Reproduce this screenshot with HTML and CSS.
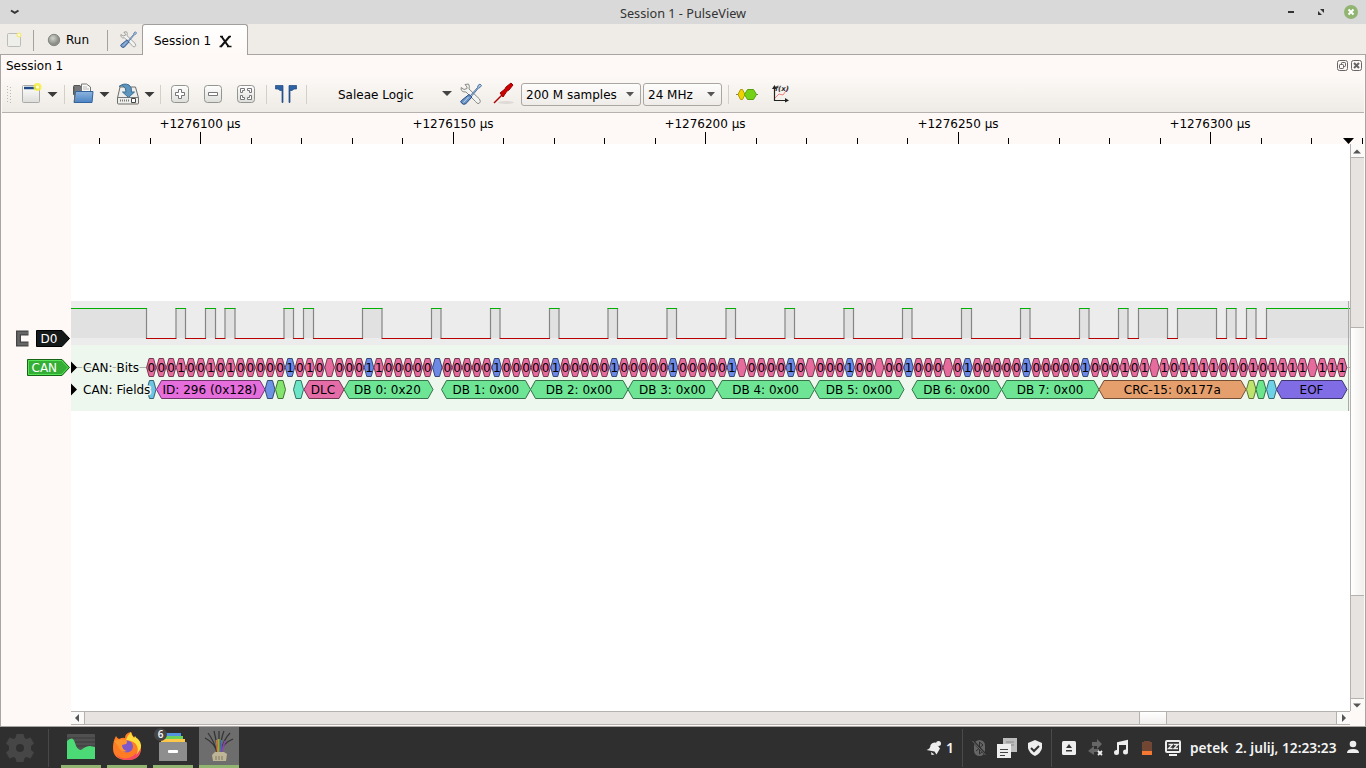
FILE: index.html
```html
<!DOCTYPE html>
<html lang="en">
<head>
<meta charset="utf-8">
<title>Session 1 - PulseView</title>
<link rel="stylesheet" href="styles.css">
</head>
<body>
<svg class="defs" width="0" height="0">
  <defs>
    <linearGradient id="blue" x2="0" y2="1"><stop stop-color="#8db4df"/><stop offset="1" stop-color="#4c84c4"/></linearGradient>
    <linearGradient id="metal" x2="0" y2="1"><stop stop-color="#fff"/><stop offset="1" stop-color="#dddeda"/></linearGradient>
    <radialGradient id="ball" cx=".4" cy=".35"><stop stop-color="#d0d3cc"/><stop offset="1" stop-color="#8c8f88"/></radialGradient>
    <symbol id="tools" viewBox="0 0 22 22">
      <path d="M5 1.500 8.500 1Q10 3 9 6L19.500 16Q21.500 19 19 20.500Q17 21 15.500 18.500L6 9Q2.500 9.500 1.200 7V4.500L4 6.500 7 5.500V4Z" fill="#f3f3f1" stroke="#888a85"/>
      <path d="m10.500 12.500 7-8L18 2.500 20 1 21.500 2.500 20 4.500 18.500 5 12 12.800" fill="#a8c5e5" stroke="#466b99" stroke-width=".9"/>
      <path d="M9 11.500 12 14 5.500 21Q3 22 1.500 20T1.500 17.500Z" fill="#6d94c2" stroke="#204a87"/>
      <path d="m8.500 14-5 5.500" stroke="#b9d3ed" fill="none"/>
    </symbol>
  </defs>
</svg>
<div class="window">
  <header class="titlebar">
    <svg class="menu-caret" width="12" height="8" viewBox="0 0 12 8"><path d="m2 2.500 3.800 2.300L9.500 2.500" fill="none" stroke="#333" stroke-width="2"/></svg>
    <span class="title">Session 1 - PulseView</span>
    <svg class="window-buttons" width="84" height="24" viewBox="0 0 84 24">
      <path d="M6 12h6" stroke="#333" stroke-width="2"/>
      <path d="M38 9h4v4zM36 11v4h4z" fill="#333"/>
      <circle cx="69" cy="12" r="7" fill="#91b571"/><path d="m66.500 9.500 5 5m0-5-5 5" stroke="#fff" stroke-width="2"/>
    </svg>
  </header>

  <nav class="tabs">
    <svg class="new-session" width="16" height="16" viewBox="0 0 16 16"><rect x="1.500" y="1.500" width="13" height="13" rx="1" fill="#eeeeea" stroke="#bdbdb7"/><circle cx="13" cy="3" r="2.500" fill="#f5ec83"/><circle cx="13" cy="3" r="1" fill="#fffef0"/></svg>
    <i class="tab-rule"></i>
    <svg class="run-ball" width="14" height="14" viewBox="0 0 14 14"><circle cx="7" cy="7" r="5.700" fill="url(#ball)" stroke="#858881"/></svg>
    <span class="run">Run</span>
    <i class="tab-rule second"></i>
    <svg class="tab-tools" width="17" height="17"><use href="#tools"/></svg>
    <div class="tab">Session 1
      <svg width="13" height="13" viewBox="0 0 13 13"><path d="M2.500 1.500 9.500 11.500M10.500 1.500 2 11.500" stroke="#111" stroke-width="2"/><path d="M1 1.500h3M8 11.500h4.500M10 1.500h2M.5 11.500h2.500" stroke="#111" stroke-width="1.400"/></svg>
    </div>
  </nav>

  <main class="session">
    <div class="dock-title"><span>Session 1</span>
      <svg width="26" height="12" viewBox="0 0 26 12" fill="none" stroke="#666">
        <rect x=".5" y=".5" width="10" height="10" rx="2"/><rect x="4.500" y="2.500" width="4" height="4" rx=".7"/><rect x="2.500" y="4.500" width="4" height="4" rx=".7" fill="#fef9f6"/>
        <rect x="14.500" y=".5" width="10" height="10" rx="2"/><path d="m17 3 5 5M22 3l-5 5" stroke-width="2"/>
      </svg>
    </div>
    <div class="toolbar">
      <svg class="toolbar-icons" width="320" height="36" viewBox="0 0 320 36">
        <path d="M7.500 10v18M10.500 11v16" stroke="#bcb8b3" stroke-dasharray="1 2"/>
        <rect x="22.500" y="9.500" width="17" height="17" rx="1" fill="url(#metal)" stroke="#aaa"/><path d="M24 12h14" stroke="#204a87" stroke-width="2.500"/><circle cx="37.500" cy="11" r="4" fill="#f7ee3e" opacity=".85"/><circle cx="37.500" cy="11" r="1.800" fill="#fffdc0"/>
        <g fill="#3b3b3b"><path d="M47.500 16h10l-5 5zM99.500 16h10l-5 5zM144.500 16h10l-5 5z"/></g>
        <g stroke="#d3cfc9"><path d="M64.500 9v19M160.500 9v19M266.500 9v19M306.500 9v19"/></g>
        <path d="M74 9.500h6l2 3h3v6H73.500v-8z" fill="#76777a" stroke="#555753"/><path d="M81.500 8h5l4 3v6h-9z" fill="#f7f7f5" stroke="#777"/><path d="M83 11h4m-4 2h6" stroke="#bbb"/><path d="M75.500 15.500h17.500l-1 11H74z" fill="url(#blue)" stroke="#33649d"/><path d="M74.500 11v15" stroke="#666"/>
        <path d="m120 11-2.500 11v5q0 1 1 1h19q1 0 1-1V22l-3-11z" fill="#eeeeec" stroke="#6c6e69"/><path d="M118 21.500h20" stroke="#777"/><path d="M120 24.500h9" stroke="#777" stroke-width="2" stroke-dasharray="1 1"/><path d="M131.500 22.500h4v4h-4z" fill="#fff" stroke="#444"/>
        <path d="M119 10.500q5-4 10-1.500 3 2 2.500 7h3l-6 5.500-6-5.500h3.500q0-5-3-6-2-.5-4 .5z" fill="#5e95bd" stroke="#3b6e96"/>
        <g fill="url(#metal)" stroke="#93958f"><rect x="171.500" y="9.500" width="17" height="17" rx="3"/><rect x="204.500" y="9.500" width="17" height="17" rx="3"/><rect x="237.500" y="9.500" width="17" height="17" rx="3"/></g>
        <g fill="#fff" stroke="#777"><path d="M178.500 13.500h3v3h3v3h-3v3h-3v-3h-3v-3h3zM208.500 16.500h9v3h-9z"/></g>
        <g fill="#fff" stroke="#777"><path d="M240.500 12.500h4v2h-2v2h-2zM251.500 12.500v4h-2v-2h-2v-2zM240.500 23.500v-4h2v2h2v2zM251.500 23.500h-4v-2h2v-2h2z"/></g>
        <g fill="#2d63a5" stroke="#1d467e" stroke-width=".7"><path d="M275.500 9.500h7.500v17h-1v-12h-2l-2-1.500h-2.500zM289 9.500h7.500V13H294l-2 1.500h-2v12h-1z"/></g>
      </svg>
      <span class="device">Saleae Logic</span>
      <svg class="caret" width="10" height="6" viewBox="0 0 10 6"><path d="M0 0h10L5 5z" fill="#444"/></svg>
      <svg class="config" width="22" height="22"><use href="#tools"/></svg>
      <svg class="probe" width="22" height="24" viewBox="0 0 22 24"><ellipse cx="13" cy="20.500" rx="8" ry="1.500" fill="#dedbd7"/><path d="m1 21 9-9" stroke="#a00" stroke-width="1.500"/><path d="m7 11 5-4 1-2 5-4 2 2-4 5-2 1-4 6z" fill="#cc0000" stroke="#990000"/></svg>
      <div class="select samples">200 M samples<svg width="8" height="5" viewBox="0 0 8 5"><path d="M0 0h8L4 4.500z" fill="#555"/></svg></div>
      <div class="select rate">24 MHz<svg width="8" height="5" viewBox="0 0 8 5"><path d="M0 0h8L4 4.500z" fill="#555"/></svg></div>
      <svg class="end-icons" width="70" height="36" viewBox="0 0 70 36">
        <path d="M6.500 9v19" stroke="#d3cfc9"/>
        <path d="M14 18.500h22" stroke="#777"/><path d="m16 18.500 2.500-5h2l2.500 5-2.500 5h-2z" fill="#edd400" stroke="#b39b00"/><path d="m22.500 18.500 3-5h6l3 5-3 5h-6z" fill="#73d216" stroke="#56a20e"/>
        <path d="M52.500 11v13.500H66" stroke="#222" fill="none" stroke-width="1.200"/><path d="m50 13 2.500-4 2.500 4zM63 22l4 2.500-4 2z" fill="#222"/><path d="m53 22 4-4 4 1 5-7" fill="none" stroke="#ee8080"/><text x="53" y="15" class="fx">f(x)</text>
      </svg>
    </div>

    <div class="view">
      <svg id="ruler" width="1363" height="31" viewBox="0 113 1363 31"></svg>
      <div class="view-row">
        <svg class="labels" width="71" height="567" viewBox="0 144 71 567">
          <path d="M28.500 333h-10v11h10" fill="none" stroke="#444" stroke-width="5"/><path d="M28 333h-9.500v11H28" fill="none" stroke="#666" stroke-width="2.500"/>
          <path d="M36.500 330.500H62l7.500 8-7.500 8H36.500z" fill="#16191a" stroke="#000"/><text x="40.500" y="343" class="chip">D0</text>
          <path d="M27.500 359.500H62l7.500 8-7.500 8H27.500z" fill="#34ae34" stroke="#176317"/><path d="M28.500 360.500H61.500l6.500 7-6.500 7h-33z" fill="none" stroke="#55e555"/><text x="31.500" y="372" class="chip">CAN</text>
        </svg>
        <svg id="traces" width="1279" height="567" viewBox="71 144 1279 567"></svg>
        <div class="vscroll">
          <svg width="13" height="14"><path d="M2 9.500h8l-4-4z" fill="#555"/></svg>
          <div class="vthumb"></div>
          <svg width="13" height="13"><path d="M2 4.500h8l-4 4z" fill="#555"/></svg>
        </div>
      </div>
      <div class="hscroll">
        <svg width="14" height="12"><path d="M8 2v8L4 6z" fill="#555"/></svg>
        <div class="hthumb"></div>
        <svg width="14" height="12"><path d="M5 2v8l4-4z" fill="#555"/></svg>
      </div>
    </div>
  </main>

  <footer class="taskbar">
    <svg class="gear" width="30" height="30" viewBox="0 0 30 30"><path d="M11.500 1h7l1 4 2 1 4-1.500 3.500 6-3 2.500v4l3 2.500-3.500 6-4-1.500-2 1-1 4h-7l-1-4-2-1-4 1.500-3.500-6L4 17v-4l-3-2.500 3.500-6 4 1.500 2-1z" fill="#464646"/><circle cx="15" cy="15" r="4" fill="#2f2f2f"/></svg>
    <i class="task-rule"></i>
    <div class="task"><svg width="28" height="28" viewBox="0 0 28 28"><rect width="28" height="25" y="2" rx="1" fill="#505050"/><path d="M0 6h28M0 10h28M0 14h28" stroke="#3b3b3b"/><path d="M0 9Q6 3 8 11q2 7 6 7 5-4 9-4l5 1v12H0z" fill="#4cda76"/></svg></div>
    <div class="task"><svg width="30" height="30" viewBox="0 0 30 30"><path d="M4 5q1 2 3 3 4-2 6-1 0-5 6-6 1 4 5 7 5 3 5 9 0 12-14 12T1 17Q1 10 4 5z" fill="#ff7b24"/><path d="M4 23q7 8 17 2 7-5 7-12 3 16-13 16Q7 29 4 23z" fill="#f54963"/><path d="M19 1q-4 4-5 8 9 1 11 6t-1 9q9-9 2-16-2-1-3-3l-1 2q-3-3-3-6z" fill="#ffdc3e"/><circle cx="15" cy="15.500" r="6" fill="#8059c9"/><path d="M2 10q6-3 12-1 2 2 0 4l-4 1q0 5 5 6-7 2-9-5z" fill="#ff952d"/></svg></div>
    <div class="task"><svg width="30" height="30" viewBox="0 0 30 30"><path d="M7 2h16v5H7z" fill="#5294e2"/><path d="M5 5h20v5H5z" fill="#6cd15c"/><path d="M3 8h24v5H3z" fill="#fdc747"/><rect x="1" y="11" width="28" height="20" rx="1" fill="#8e8e8e"/><rect x="10" y="19" width="10" height="3" rx="1" fill="#fff"/></svg><b class="badge">6</b></div>
    <div class="task active"><svg width="32" height="32" viewBox="0 0 32 32" fill="none"><path d="M14 23Q12 13 2 8M14 22Q11 11 5 3M15 22Q13 9 11 1M16 22V1M17 22Q18 8 21 1M18 22Q20 10 27 3M18 22Q20 13 30 9" stroke="#333" stroke-width="1.200"/><path d="M14.500 22 13.500 10" stroke="#c7753b" stroke-width="1.500"/><path d="M15.500 22V9" stroke="#d9a030" stroke-width="1.500"/><path d="M16.500 22V9" stroke="#57994b" stroke-width="1.500"/><path d="m17.500 22 1-12" stroke="#4771bc" stroke-width="1.500"/><path d="m18.500 22 3.500-11" stroke="#8e44ad" stroke-width="1.800"/><path d="m9 25 3-3h9l3 2-1 7H10z" fill="#bdb596"/><path d="M13 26v4m3-4v4m3-4v4" stroke="#827b64"/></svg></div>

    <div class="tray">
      <svg width="368" height="41" viewBox="920 727 368 41" class="tray-icons">
        <path d="M926.500 750q4-1 4-5 1.500-3 5-2.500l4.500 6-3.500 6-2-3z" fill="#eee"/><circle cx="938.500" cy="743.500" r="2.500" fill="#eee"/><path d="m931 752 3.500 2.500-3 .5z" fill="#eee"/>
        <text x="946" y="753" class="tray-text">1</text>
        <path d="M962.500 729v38M1051.500 729v38" stroke="#4a4a4a"/>
        <rect x="974" y="740" width="11" height="16" rx="5.500" fill="#666"/><path d="m976 744 7 7-3.500 3v-12l3.500 3-7 6" fill="none" stroke="#2f2f2f"/><path d="m973 741 13 14" stroke="#2f2f2f" stroke-width="2.500"/><path d="m972.500 741 13 14" stroke="#666"/>
        <path d="M1003 738h14v14h-14z" fill="#bdbdbd"/><path d="M1006 742h8m-8 3h8" stroke="#888"/><path d="M997 744h14v14h-14z" fill="#eee"/><path d="M1000 749.500h8m-8 3h8m-8 3h5" stroke="#444"/>
        <path d="m1035 740 7 3v5q-1 5-7 8-6-3-7-8v-5z" fill="#eee"/><path d="m1031 748 3 3 5-5" fill="none" stroke="#333" stroke-width="2"/>
        <rect x="1062" y="741" width="14" height="14" rx="1.500" fill="#eee"/><path d="m1066 748 3-4 3 4zM1066 750h6v1.500h-6z" fill="#333"/>
        <path d="M1092 742h5v-3l5 5-5 5v-3h-5zM1099 749h-5v-3l-6 5 6 4v-3h5z" fill="#666"/><path d="m1098 751 4 4m0-4-4 4" stroke="#eee" stroke-width="1.800"/>
        <path d="M1118 752v-9l9-2v10" fill="none" stroke="#eee" stroke-width="2"/><path d="M1118 743.500h9" stroke="#eee" stroke-width="3"/><circle cx="1116.500" cy="752.500" r="2.500" fill="#eee"/><circle cx="1125.500" cy="752" r="2.500" fill="#eee"/>
        <path d="M1144 741h6v1h2v9h-10v-9h2z" fill="#714733"/><path d="M1142 751h10v4h-10z" fill="#f57933"/>
        <rect x="1166" y="741" width="14" height="11" rx="1" fill="#333" stroke="#eee" stroke-width="2"/><path d="M1168.500 744.500h4l-4 4h4M1174 744.500h4l-4 4h4" fill="none" stroke="#eee" stroke-width="1.300"/><path d="M1169 755h8" stroke="#eee" stroke-width="2"/>
      </svg>
      <span class="clock"><span>petek</span><span>2. julij, 12:23:23</span></span>
      <svg class="user" width="14" height="15" viewBox="0 0 14 15"><circle cx="7" cy="4" r="3.300" fill="#eee"/><path d="M1 13q0-4 6-4t6 4z" fill="#eee"/></svg>
    </div>
  </footer>
</div>
<script src="traces.js"></script>
</body>
</html>
```
FILE: styles.css
```css
* { box-sizing: border-box; }
body { margin: 0; font: 13px/16px "DejaVu Sans", sans-serif; color: #000; }
svg { display: block; flex: none; }
.defs { position: absolute; }
.window { width: 1366px; height: 768px; display: flex; flex-direction: column; overflow: hidden; background: #efebe7; }

.titlebar { height: 24px; flex: none; display: grid; grid-template-columns: 1fr auto 1fr; align-items: center; background: #d9d9d9; }
.menu-caret { margin-left: 9px; }
.title { font: 12.7px/20px "Noto Sans", sans-serif; color: #333; padding-top: 2px; }
.window-buttons { justify-self: end; }

.tabs { height: 31px; flex: none; display: flex; align-items: center; border-bottom: 1px solid #a9a5a2; font-size: 12px; }
.new-session { margin-left: 6px; margin-top: 1px; }
.tab-rule { width: 1px; height: 21px; background: #a5a19d; margin: 2px 13px 0 11px; }
.run-ball { margin-top: 1px; }
.run { margin-left: 5px; width: 41px; padding-top: 2px; }
.tab-rule.second { margin: 2px 12px 0 0; }
.tab { width: 106px; height: 31px; margin-left: 5px; padding: 2px 0 0 11px; align-self: flex-start; display: flex; align-items: center; gap: 8px; border: 1px solid #a29e9b; border-bottom: 0; border-radius: 3px 3px 0 0; background: linear-gradient(#fff, #fef9f6); white-space: nowrap; }

.session { flex: 1; min-height: 0; border: solid #a9a5a2; border-width: 0 1px 1px; background: #fef9f6; display: flex; flex-direction: column; }
.dock-title { height: 21px; flex: none; display: flex; justify-content: space-between; align-items: center; padding: 0 2px 0 5px; font-size: 12px; }
.toolbar { height: 37px; flex: none; margin: 0 1px; display: flex; align-items: center; border-bottom: 1px solid #b5b1ae; background: linear-gradient(#fdf9f6, #eeebe6); font-size: 12px; }
.toolbar-icons { margin-left: -2px; }
.device { width: 105px; margin-left: 18px; padding-top: 1px; }
.toolbar .caret { margin: -1px 0 0 -1px; }
.config { margin-left: 8px; }
.probe { margin-left: 11px; }
.select { height: 23px; display: flex; align-items: center; justify-content: space-between; margin-top: 1px; padding: 0 6px 0 4px; border: 1px solid #aaa6a2; border-radius: 3px; background: linear-gradient(#fdfdfc, #efece8); white-space: nowrap; }
.samples { width: 120px; margin-left: 6px; }
.rate { width: 79px; margin-left: 2px; }
.fx { font: italic bold 7px "DejaVu Sans", sans-serif; fill: #333; }

.view { flex: 1; min-height: 0; }
.view-row { display: flex; height: 567px; }
.labels { margin-left: -1px; }
.chip { font-size: 12px; fill: #fff; }
#ruler { margin-left: -1px; }
#ruler text { font-size: 12px; text-anchor: middle; }
#traces { background: #fff; }
#traces text { font-size: 12px; text-anchor: middle; }
#traces .row-label { text-anchor: start; stroke: #eef7ee; stroke-width: 3px; paint-order: stroke; stroke-linejoin: round; }

.vscroll { width: 14px; border-left: 1px solid #b5b1ae; background: #e7e3e0; display: flex; flex-direction: column; }
.vscroll svg, .hscroll svg { background: #fbfaf8; }
.vscroll svg:first-child { border-bottom: 1px solid #b5b1ae; }
.vscroll svg:last-child { border-top: 1px solid #b5b1ae; }
.vthumb { height: 269px; margin: 169px 0 auto; border: solid #b5b1ae; border-width: 1px 0; background: linear-gradient(90deg, #fff, #f1efec); }
.hscroll { height: 14px; margin: 0 15px 0 70px; border: solid #b5b1ae; border-width: 1px 0; display: flex; background: #e7e3e0; }
.hscroll svg:first-child { border-right: 1px solid #b5b1ae; }
.hscroll svg:last-child { border-left: 1px solid #b5b1ae; }
.hthumb { width: 28px; margin: 0 auto 0 1054px; border: solid #b5b1ae; border-width: 0 1px; background: linear-gradient(#fff, #f1efec); }

.taskbar { height: 41px; flex: none; display: flex; background: #2f2f2f; color: #f4f4f4; }
.gear { margin: 6px 0 0 5px; }
.task-rule { width: 1px; height: 38px; margin: 2px 12px 0 13px; background: #484848; }
.task { position: relative; width: 40px; height: 41px; margin-right: 6px; border-bottom: 3px solid #91b571; display: flex; justify-content: center; align-items: center; }
.task.active { background: #6d6d6d; }
.badge { position: absolute; left: 1px; top: 1px; width: 13px; height: 13px; border-radius: 50%; background: #454545; font: 600 10px/13px "Noto Sans", sans-serif; text-align: center; }
.tray { margin-left: auto; display: flex; align-items: center; }
.tray-icons { margin-right: -98px; }
.tray-text { font: 600 14px "Noto Sans", sans-serif; fill: #f4f4f4; }
.clock { display: flex; gap: 7px; font: 600 13.7px/20px "Noto Sans", sans-serif; white-space: nowrap; width: 147px; }
.user { margin: 0 6px 0 9px; }
```
FILE: traces.js
```js
const hex = (l, r, y, slant, fill, stroke) =>
  `<path d="M${l} ${y}L${l + slant} ${y - 9}H${r - slant}L${r} ${y}L${r - slant} ${y + 9}H${l + slant}Z" fill="${fill}" stroke="${stroke}"/>`;

// Time ruler
let ruler = '';
for (let i = 0; i < 26; i++) {
  const x = Math.floor(99.5 + i * 50.5) + 0.5;
  const major = i % 5 === 2;
  ruler += `<path d="M${x} ${major ? 132 : 138}V144" stroke="#000"/>`;
  if (major) ruler += `<text x="${x - 0.5}" y="128">+1276${100 + (i - 2) * 10} µs</text>`;
}
ruler += '<path d="M1343 138h11l-5.500 6z"/>';
document.getElementById('ruler').innerHTML = ruler;

// Logic signal
const highs = [[70, 146.5], [176, 185.5], [205.5, 215.5], [225, 235], [284, 293.5], [303.5, 313.5], [362.5, 382], [431.5, 441], [490.5, 500], [549.5, 559], [608, 617.5], [667, 676.5], [726, 735.5], [785, 794.5], [844, 853.5], [902.5, 912], [961.5, 971.5], [1020.5, 1030], [1079.5, 1089], [1118.5, 1128], [1138.5, 1167.5], [1177.5, 1216.5], [1226.5, 1236], [1246.5, 1256], [1266.5, 1351]];
let out = '<path d="M71 301H1350V345H71Z" fill="#ececec"/><path d="M71 345H1350V411H71Z" fill="#eef7ee"/>';
highs.forEach(([a, b], i) => {
  out += `<path d="M${a} 308H${b}V338H${a}Z" fill="#e1e1e1"/><path d="M${a} 338V308M${b} 308V338" stroke="#858585" stroke-width="1.200"/><path d="M${a - 0.5} 308.500H${b + 0.5}" stroke="#00b000"/>`;
  if (highs[i + 1]) out += `<path d="M${b - 0.5} 338.500H${highs[i + 1][0] + 0.5}" stroke="#b80000"/>`;
});
out += '<path d="M71 367.500H1350" stroke="#aab1aa"/><path d="M1348.500 301V411" stroke="#aaa"/>';

// Decoded bits: "b" is a stuffed one, "B" a stuffed bit without room for text, "." a plain one without text
const bits = ['00010010100000b', '010.000b', '100000B', '00000b', '00000b', '00000b', '00000b', '00000b', '.0000b', '0.000b', '00.00b', '000.0b', '00000b', '00000b', '000101.101111010101111.111'].join('');
const anchors = [[0, 151.3], [14, 290], [22, 369], [29, 437.3], [35, 496.7], [53, 673], [95, 1085.3], [121, 1342]];
const bitX = i => {
  const k = Math.max(1, anchors.findIndex(a => a[0] >= i));
  const [i0, x0] = anchors[k - 1], [i1, x1] = anchors[k];
  return x0 + (x1 - x0) * (i - i0) / (i1 - i0);
};
[...bits].forEach((c, i) => {
  const x = bitX(i), stuffed = c === 'b' || c === 'B';
  out += hex(x - 4.7, x + 4.7, 367.5, 2.5, stuffed ? '#6c89e6' : '#e76c9e', stuffed ? '#374675' : '#763751');
});
[...bits].forEach((c, i) => {
  if (c !== '.' && c !== 'B') out += `<text x="${bitX(i)}" y="372">${c === 'b' ? 1 : c}</text>`;
});

// Decoded fields
const G = '#6de594';
const fields = [[147, 156, '#6dc5e5'], [156.5, 265, '#e56ddc', 'ID: 296 (0x128)'], [265, 275, '#6d93e5'], [275.5, 285.5, '#83e56d'], [293.5, 303.5, '#6de5c7'], [304, 344, '#e56da7', 'DLC'], [344, 433, G, 'DB 0: 0x20'], [441.5, 530.5, G, 'DB 1: 0x00'], [530.5, 628, G, 'DB 2: 0x00'], [628, 717, G, 'DB 3: 0x00'], [717, 814.5, G, 'DB 4: 0x00'], [814.5, 904, G, 'DB 5: 0x00'], [912, 1001.5, G, 'DB 6: 0x00'], [1001.5, 1099, G, 'DB 7: 0x00'], [1099, 1246, '#e59f6d', 'CRC-15: 0x177a'], [1246.5, 1256, '#bde56d'], [1256, 1266, '#6de58d'], [1266.5, 1276.5, '#6dd2e5'], [1276.5, 1347, '#806de5', 'EOF']];
const outline = fill => '#' + [1, 3, 5].map(k => (parseInt(fill.substr(k, 2), 16) >> 1).toString(16).padStart(2, '0')).join('');
fields.forEach(([l, r, fill, text]) => {
  out += hex(l, r, 389.5, text ? 5 : 2.5, fill, outline(fill));
  if (text) out += `<text x="${(l + r) / 2 - (l < 440 ? 1 : 0.2)}" y="394">${text}</text>`;
});
out += '<path d="M71 361.500l6 6-6 6ZM71 383.500l6 6-6 6Z"/><text class="row-label" x="83" y="372">CAN: Bits</text><text class="row-label" x="83" y="394">CAN: Fields</text>';
document.getElementById('traces').innerHTML = out;
```
